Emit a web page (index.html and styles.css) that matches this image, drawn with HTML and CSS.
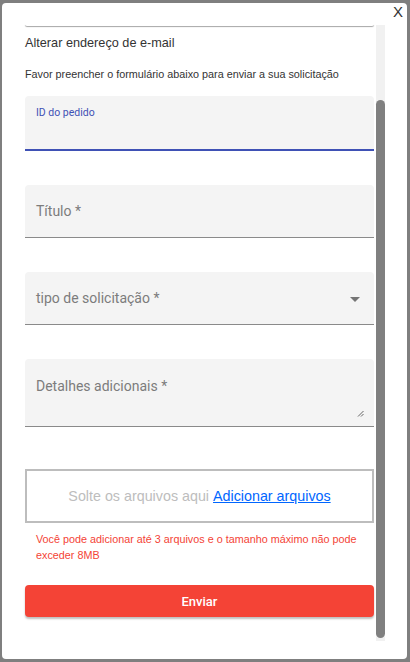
FILE: index.html
```html
<!DOCTYPE html>
<html lang="pt">
<head>
<meta charset="utf-8">
<link rel="stylesheet" href="styles.css">
</head>
<body>
<div class="modal">
  <button class="close">X</button>
  <div class="body">
    <div class="content">
      <div class="card-edge"></div>
      <h2 class="title">Alterar endereço de e-mail</h2>
      <p class="intro">Favor preencher o formulário abaixo para enviar a sua solicitação</p>
      <div class="field focused">
        <span class="label small">ID do pedido</span>
      </div>
      <div class="field">
        <span class="label">Título *</span>
      </div>
      <div class="field select">
        <span class="label">tipo de solicitação *</span>
        <span class="arrow"></span>
      </div>
      <div class="field area">
        <span class="label">Detalhes adicionais *</span>
        <svg class="grip" width="7" height="7" viewBox="0 0 7 7"><path d="M1 6.5 L6.5 1 M4 6.5 L6.5 4" stroke="#555" stroke-width="0.9" fill="none"/></svg>
      </div>
      <div class="drop">Solte os arquivos aqui&nbsp;<a href="#" class="link">Adicionar arquivos</a></div>
      <p class="warn">Você pode adicionar até 3 arquivos e o tamanho máximo não pode exceder 8MB</p>
      <button class="send">Enviar</button>
    </div>
    <div class="track"><div class="thumb"></div></div>
  </div>
</div>
</body>
</html>
```
FILE: styles.css
```css
html, body { margin: 0; padding: 0; }
body {
  background: #7f7f7f;
  font-family: "Liberation Sans", Arial, sans-serif;
  width: 410px;
  height: 662px;
  overflow: hidden;
}
.modal {
  position: relative;
  box-sizing: border-box;
  margin: 3px 0 0 2px;
  width: 405px;
  height: 656px;
  background: #fff;
  border-radius: 4px;
  padding: 22px 0 0 23px;
}
.close {
  position: absolute;
  top: 1px;
  right: 4px;
  border: 0;
  background: none;
  font-family: "Liberation Sans", Arial, sans-serif;
  font-size: 15px;
  color: #333;
  padding: 0;
  line-height: 16px;
}
.body {
  display: flex;
  gap: 2px;
  align-items: flex-start;
}
.content {
  width: 349px;
  display: flex;
  flex-direction: column;
}
.card-edge {
  height: 2px;
  border-radius: 0 0 4px 4px;
  box-shadow: 0 1px 1px rgba(0,0,0,0.35);
  background: #fff;
  margin-top: -1px;
}
.title {
  margin: 9px 0 0 0;
  font-size: 12.7px;
  font-weight: normal;
  color: #333;
  line-height: 16px;
}
.intro {
  margin: 16px 0 0 0;
  font-size: 10.8px;
  color: #333;
  line-height: 14px;
}
.field {
  position: relative;
  margin-top: 34px;
  height: 52px;
  background: #f4f4f4;
  border-radius: 4px 4px 0 0;
  border-bottom: 1px solid #8a8a8a;
  display: flex;
  align-items: center;
  padding-left: 11px;
  font-family: Roboto, "Liberation Sans", sans-serif;
}
.field.focused {
  margin-top: 15px;
  border-bottom: 2px solid #3f51b5;
  height: 53px;
  align-items: flex-start;
}
.label {
  font-size: 14px;
  color: #7c7c7c;
}
.label.small {
  font-size: 10.5px;
  color: #3f51b5;
  margin-top: 10px;
}
.select .arrow {
  position: absolute;
  right: 14px;
  top: 25px;
  width: 0;
  height: 0;
  border-left: 5px solid transparent;
  border-right: 5px solid transparent;
  border-top: 5px solid #757575;
}
.field.area {
  height: 67px;
  align-items: flex-start;
}
.area .label { margin-top: 19px; }
.grip {
  position: absolute;
  right: 10px;
  bottom: 9px;
}
.drop {
  margin-top: 42px;
  height: 50px;
  border: 2px solid #bdbdbd;
  display: flex;
  align-items: center;
  justify-content: center;
  font-size: 14.3px;
  color: #bdbdbd;
  font-family: "Liberation Sans", Arial, sans-serif;
}
.link { color: #0066ff; text-decoration: underline; }
.warn {
  margin: 8px 0 0 0;
  padding: 0 11px;
  font-size: 10.8px;
  line-height: 16px;
  color: #f44336;
}
.send {
  margin-top: 22px;
  height: 32px;
  border: 0;
  border-radius: 4px;
  background: #f44336;
  color: #fff;
  font-family: Roboto, "Liberation Sans", sans-serif;
  font-weight: 500;
  font-size: 13px;
  box-shadow: 0 2px 2px rgba(0,0,0,0.25);
}
.track {
  width: 9px;
  height: 616px;
  background: #f1f1f1;
  display: flex;
  flex-direction: column;
}
.thumb {
  margin-top: 75px;
  height: 538px;
  background: #808080;
  border-radius: 5px;
}
```
